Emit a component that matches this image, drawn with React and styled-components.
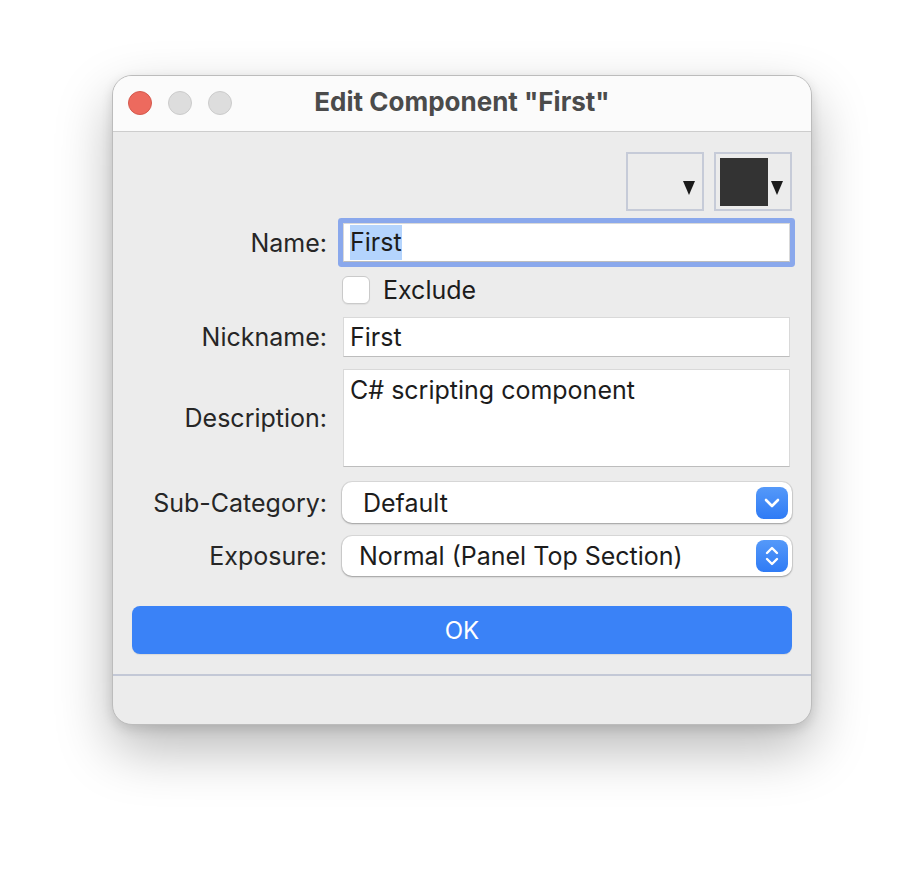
import React from 'react';
import styled, { createGlobalStyle } from 'styled-components';

const GlobalStyle = createGlobalStyle`
  * { box-sizing: border-box; }
  body {
    margin: 0;
    background: #ffffff;
    font-family: Inter, "Liberation Sans", sans-serif;
  }
`;

const Page = styled.div`
  height: 872px;
  padding: 75px 0 0 112px;
`;

const Window = styled.div`
  width: 700px;
  background: #ececec;
  border: 1px solid #bcbcbc;
  border-radius: 20px;
  overflow: hidden;
  box-shadow: 0 24px 55px rgba(0, 0, 0, 0.28), 0 4px 12px rgba(0, 0, 0, 0.12);
`;

const TitleBar = styled.div`
  position: relative;
  height: 56px;
  background: #fbfbfb;
  border-bottom: 1px solid #cdcdcd;
  display: flex;
  align-items: center;
  justify-content: center;
`;

const Lights = styled.div`
  position: absolute;
  left: 15px;
  top: 15px;
  display: flex;
  gap: 16px;
`;

const Light = styled.span`
  width: 24px;
  height: 24px;
  border-radius: 50%;
  background: ${p => (p.$red ? '#ed6a5e' : '#dddddd')};
  border: 1px solid ${p => (p.$red ? '#d4594d' : '#cbcbcb')};
`;

const Title = styled.div`
  font-size: 26px;
  font-weight: 700;
  color: #4b4b4b;
  margin-top: -4px;
`;

const Body = styled.div`
  padding: 20px 19px 0 19px;
`;

const PickerRow = styled.div`
  display: flex;
  justify-content: flex-end;
  gap: 10px;
`;

const Picker = styled.div`
  width: 78px;
  height: 59px;
  border: 2px solid #c6cbd8;
  display: flex;
  align-items: flex-start;
  padding: 4px 7px 0 4px;
  justify-content: ${p => (p.$swatch ? 'space-between' : 'flex-end')};
`;

const Swatch = styled.div`
  width: 48px;
  height: 48px;
  background: #333333;
`;

const Arrow = styled.span`
  margin-top: 23px;
  width: 0;
  height: 0;
  border-left: 6px solid transparent;
  border-right: 6px solid transparent;
  border-top: 14px solid #1a1a1a;
`;

const Row = styled.div`
  display: grid;
  grid-template-columns: 195px 450px;
  column-gap: 15px;
  align-items: center;
  margin-top: ${p => p.$mt}px;
`;

const Label = styled.div`
  text-align: right;
  font-size: 25px;
  color: #262626;
`;

const Field = styled.div`
  margin: 0 2px 0 1px;
  height: ${p => p.$h || 40}px;
  background: #ffffff;
  border: 1px solid #d9d9d9;
  border-bottom-color: #bdbdbd;
  font-size: 25px;
  color: #1c1c1c;
  padding: ${p => (p.$multi ? '5px 6px' : '0 6px')};
  display: flex;
  align-items: ${p => (p.$multi ? 'flex-start' : 'center')};
  box-shadow: ${p => (p.$focus ? '0 0 0 5px #8aa8ec' : 'none')};
  border-radius: ${p => (p.$focus ? '1px' : '0')};
`;

const Selected = styled.span`
  background: #b4d4fd;
  padding: 2px 0 3px;
`;

const CheckLine = styled.div`
  grid-column: 2;
  height: 28px;
  display: flex;
  align-items: center;
  gap: 13px;
  font-size: 25px;
  color: #1c1c1c;
`;

const Checkbox = styled.span`
  width: 28px;
  height: 28px;
  border-radius: 6px;
  background: #ffffff;
  border: 1px solid #cacaca;
  box-shadow: 0 1px 1px rgba(0, 0, 0, 0.06);
`;

const Select = styled.div`
  height: ${p => p.$h}px;
  background: #ffffff;
  border-radius: 10px;
  box-shadow: 0 0 0 1px rgba(0, 0, 0, 0.08), 0 1px 2px rgba(0, 0, 0, 0.28);
  display: flex;
  align-items: center;
  justify-content: space-between;
  padding: 0 4px 0 ${p => p.$pl}px;
  font-size: 25px;
  color: #1c1c1c;
`;

const Stepper = styled.span`
  width: 32px;
  height: 32px;
  border-radius: 8px;
  background: linear-gradient(#5599f9, #2f7bf5);
  display: flex;
  align-items: center;
  justify-content: center;
`;

const OkButton = styled.button`
  display: block;
  width: 100%;
  height: 48px;
  margin-top: 30px;
  border: none;
  border-radius: 8px;
  background: #3a82f7;
  color: #ffffff;
  font-family: Inter, "Liberation Sans", sans-serif;
  font-size: 24px;
  box-shadow: 0 1px 1px rgba(0, 0, 0, 0.08);
`;

const Separator = styled.div`
  margin-top: 20px;
  height: 2px;
  background: #c3c8d6;
`;

const Footer = styled.div`
  height: 48px;
`;

function ChevronDown() {
  return (
    <svg width="16" height="10" viewBox="0 0 16 10">
      <path d="M2 2 L8 8 L14 2" fill="none" stroke="#fff" strokeWidth="2.6" strokeLinecap="round" strokeLinejoin="round" />
    </svg>
  );
}

function ChevronUpDown() {
  return (
    <svg width="16" height="24" viewBox="0 0 16 24">
      <path d="M3 9 L8 4 L13 9" fill="none" stroke="#fff" strokeWidth="2.4" strokeLinecap="round" strokeLinejoin="round" />
      <path d="M3 15 L8 20 L13 15" fill="none" stroke="#fff" strokeWidth="2.4" strokeLinecap="round" strokeLinejoin="round" />
    </svg>
  );
}

function App() {
  return (
    <Page>
      <GlobalStyle />
      <Window>
        <TitleBar>
          <Lights>
            <Light $red />
            <Light />
            <Light />
          </Lights>
          <Title>Edit Component "First"</Title>
        </TitleBar>

        <Body>
          <PickerRow>
            <Picker>
              <Arrow />
            </Picker>
            <Picker $swatch>
              <Swatch />
              <Arrow />
            </Picker>
          </PickerRow>

          <Row $mt={12}>
            <Label>Name:</Label>
            <Field $h={39} $focus>
              <Selected>First</Selected>
            </Field>
          </Row>

          <Row $mt={14}>
            <CheckLine>
              <Checkbox />
              Exclude
            </CheckLine>
          </Row>

          <Row $mt={13}>
            <Label>Nickname:</Label>
            <Field $h={40}>First</Field>
          </Row>

          <Row $mt={12}>
            <Label>Description:</Label>
            <Field $h={98} $multi>C# scripting component</Field>
          </Row>

          <Row $mt={15}>
            <Label>Sub-Category:</Label>
            <Select $h={41} $pl={21}>
              Default
              <Stepper><ChevronDown /></Stepper>
            </Select>
          </Row>

          <Row $mt={13}>
            <Label>Exposure:</Label>
            <Select $h={40} $pl={17}>
              Normal (Panel Top Section)
              <Stepper><ChevronUpDown /></Stepper>
            </Select>
          </Row>

          <OkButton>OK</OkButton>
        </Body>
        <Separator />
        <Footer />
      </Window>
    </Page>
  );
}

export default App;
